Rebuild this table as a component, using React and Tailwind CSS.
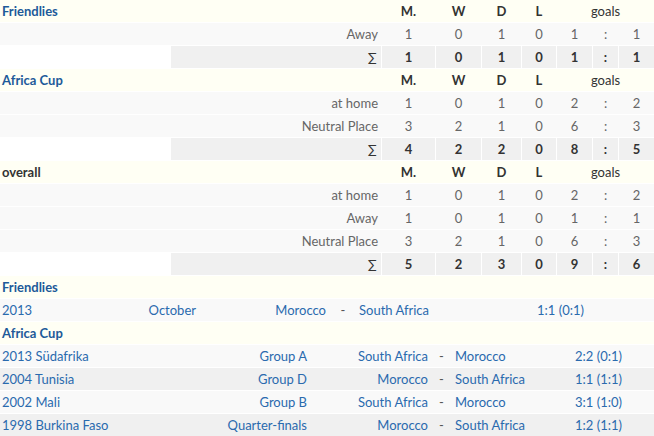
const statCols = 'grid grid-cols-[170px_210px_53px_45px_39px_34px_35px_25px_1fr] gap-x-px';

const statGroups = [
  {
    title: 'Friendlies',
    rows: [{ label: 'Away', v: [1, 0, 1, 0, 1, 1] }],
    sum: [1, 0, 1, 0, 1, 1],
  },
  {
    title: 'Africa Cup',
    rows: [
      { label: 'at home', v: [1, 0, 1, 0, 2, 2] },
      { label: 'Neutral Place', v: [3, 2, 1, 0, 6, 3] },
    ],
    sum: [4, 2, 2, 0, 8, 5],
  },
  {
    title: 'overall',
    dark: true,
    rows: [
      { label: 'at home', v: [1, 0, 1, 0, 2, 2] },
      { label: 'Away', v: [1, 0, 1, 0, 1, 1] },
      { label: 'Neutral Place', v: [3, 2, 1, 0, 6, 3] },
    ],
    sum: [5, 2, 3, 0, 9, 6],
  },
];

const cupMatches = [
  { year: '2013 Südafrika', round: 'Group A', home: 'South Africa', away: 'Morocco', res: '2:2 (0:1)' },
  { year: '2004 Tunisia', round: 'Group D', home: 'Morocco', away: 'South Africa', res: '1:1 (1:1)' },
  { year: '2002 Mali', round: 'Group B', home: 'South Africa', away: 'Morocco', res: '3:1 (1:0)' },
  { year: '1998 Burkina Faso', round: 'Quarter-finals', home: 'Morocco', away: 'South Africa', res: '1:2 (1:1)' },
];

function NumCells({ v, bold }) {
  const cls = bold ? 'font-bold text-[#333]' : 'text-[#666]';
  return (
    <>
      {v.slice(0, 4).map((n, i) => (
        <div key={i} className={`flex items-center justify-center ${cls}`}>{n}</div>
      ))}
      <div className={`flex items-center justify-center ${cls}`}>{v[4]}</div>
      <div className={`flex items-center justify-center ${cls}`}>:</div>
      <div className={`flex items-center justify-center ${cls}`}>{v[5]}</div>
    </>
  );
}

function StatGroup({ g }) {
  return (
    <>
      <div className={`${statCols} h-[22px] bg-[#fffff4]`}>
        <div className={`flex items-center pl-[2px] font-bold ${g.dark ? 'text-[#333]' : 'text-[#1d5a99]'}`}>{g.title}</div>
        <div />
        {['M.', 'W', 'D', 'L'].map((h) => (
          <div key={h} className="flex items-center justify-center font-bold text-[#333]">{h}</div>
        ))}
        <div className="col-span-3 flex items-center justify-center text-[#333]">goals</div>
      </div>
      {g.rows.map((r, i) => (
        <div key={i} className={`${statCols} h-[22px] bg-[#f9f9f9]`}>
          <div />
          <div className="flex items-center justify-end pr-[3px] text-[#666]">{r.label}</div>
          <NumCells v={r.v} />
        </div>
      ))}
      <div className={`${statCols} h-[22px]`}>
        <div className="bg-white" />
        <div className="flex items-center justify-end pr-[4px] bg-[#f0f0f0] text-[#333]">∑</div>
        <div className="contents">
          {g.sum.slice(0, 4).map((n, i) => (
            <div key={i} className="flex items-center justify-center bg-[#f0f0f0] font-bold text-[#333]">{n}</div>
          ))}
          <div className="flex items-center justify-center bg-[#f0f0f0] font-bold text-[#333]">{g.sum[4]}</div>
          <div className="flex items-center justify-center bg-[#f0f0f0] font-bold text-[#333]">:</div>
          <div className="flex items-center justify-center bg-[#f0f0f0] font-bold text-[#333]">{g.sum[5]}</div>
        </div>
      </div>
    </>
  );
}

function SectionHead({ children }) {
  return (
    <div className="h-[22px] bg-[#fffff4] flex items-center pl-[2px] font-bold text-[#1d5a99]">{children}</div>
  );
}

export default function App() {
  return (
    <div className="w-[654px] h-[436px] overflow-hidden bg-white text-[13px] leading-none font-['Lato',sans-serif]">
      <div className="flex flex-col gap-y-px">
        {statGroups.map((g) => (
          <StatGroup key={g.title} g={g} />
        ))}

        <SectionHead>Friendlies</SectionHead>
        <div className="grid grid-cols-[76px_122px_130px_24px_177px_1fr] gap-x-px h-[22px] bg-[#f9f9f9] text-[#2a6aae]">
          <div className="flex items-center pl-[2px]">2013</div>
          <div className="flex items-center justify-end pr-[3px]">October</div>
          <div className="flex items-center justify-end pr-[4px]">Morocco</div>
          <div className="flex items-center justify-center text-[#555]">-</div>
          <div className="flex items-center pl-[3px]">South Africa</div>
          <div className="flex items-center pl-[3px]">1:1 (0:1)</div>
        </div>

        <SectionHead>Africa Cup</SectionHead>
        {cupMatches.map((m, i) => (
          <div
            key={m.year}
            className={`grid grid-cols-[173px_136px_120px_19px_119px_1fr] gap-x-px h-[22px] text-[#2a6aae] ${i % 2 ? 'bg-[#f0f0f0]' : 'bg-[#f9f9f9]'}`}
          >
            <div className="flex items-center pl-[2px]">{m.year}</div>
            <div className="flex items-center justify-end pr-[3px]">{m.round}</div>
            <div className="flex items-center justify-end pr-[3px]">{m.home}</div>
            <div className="flex items-center justify-center text-[#555]">-</div>
            <div className="flex items-center pl-[3px]">{m.away}</div>
            <div className="flex items-center pl-[3px]">{m.res}</div>
          </div>
        ))}
      </div>
    </div>
  );
}
